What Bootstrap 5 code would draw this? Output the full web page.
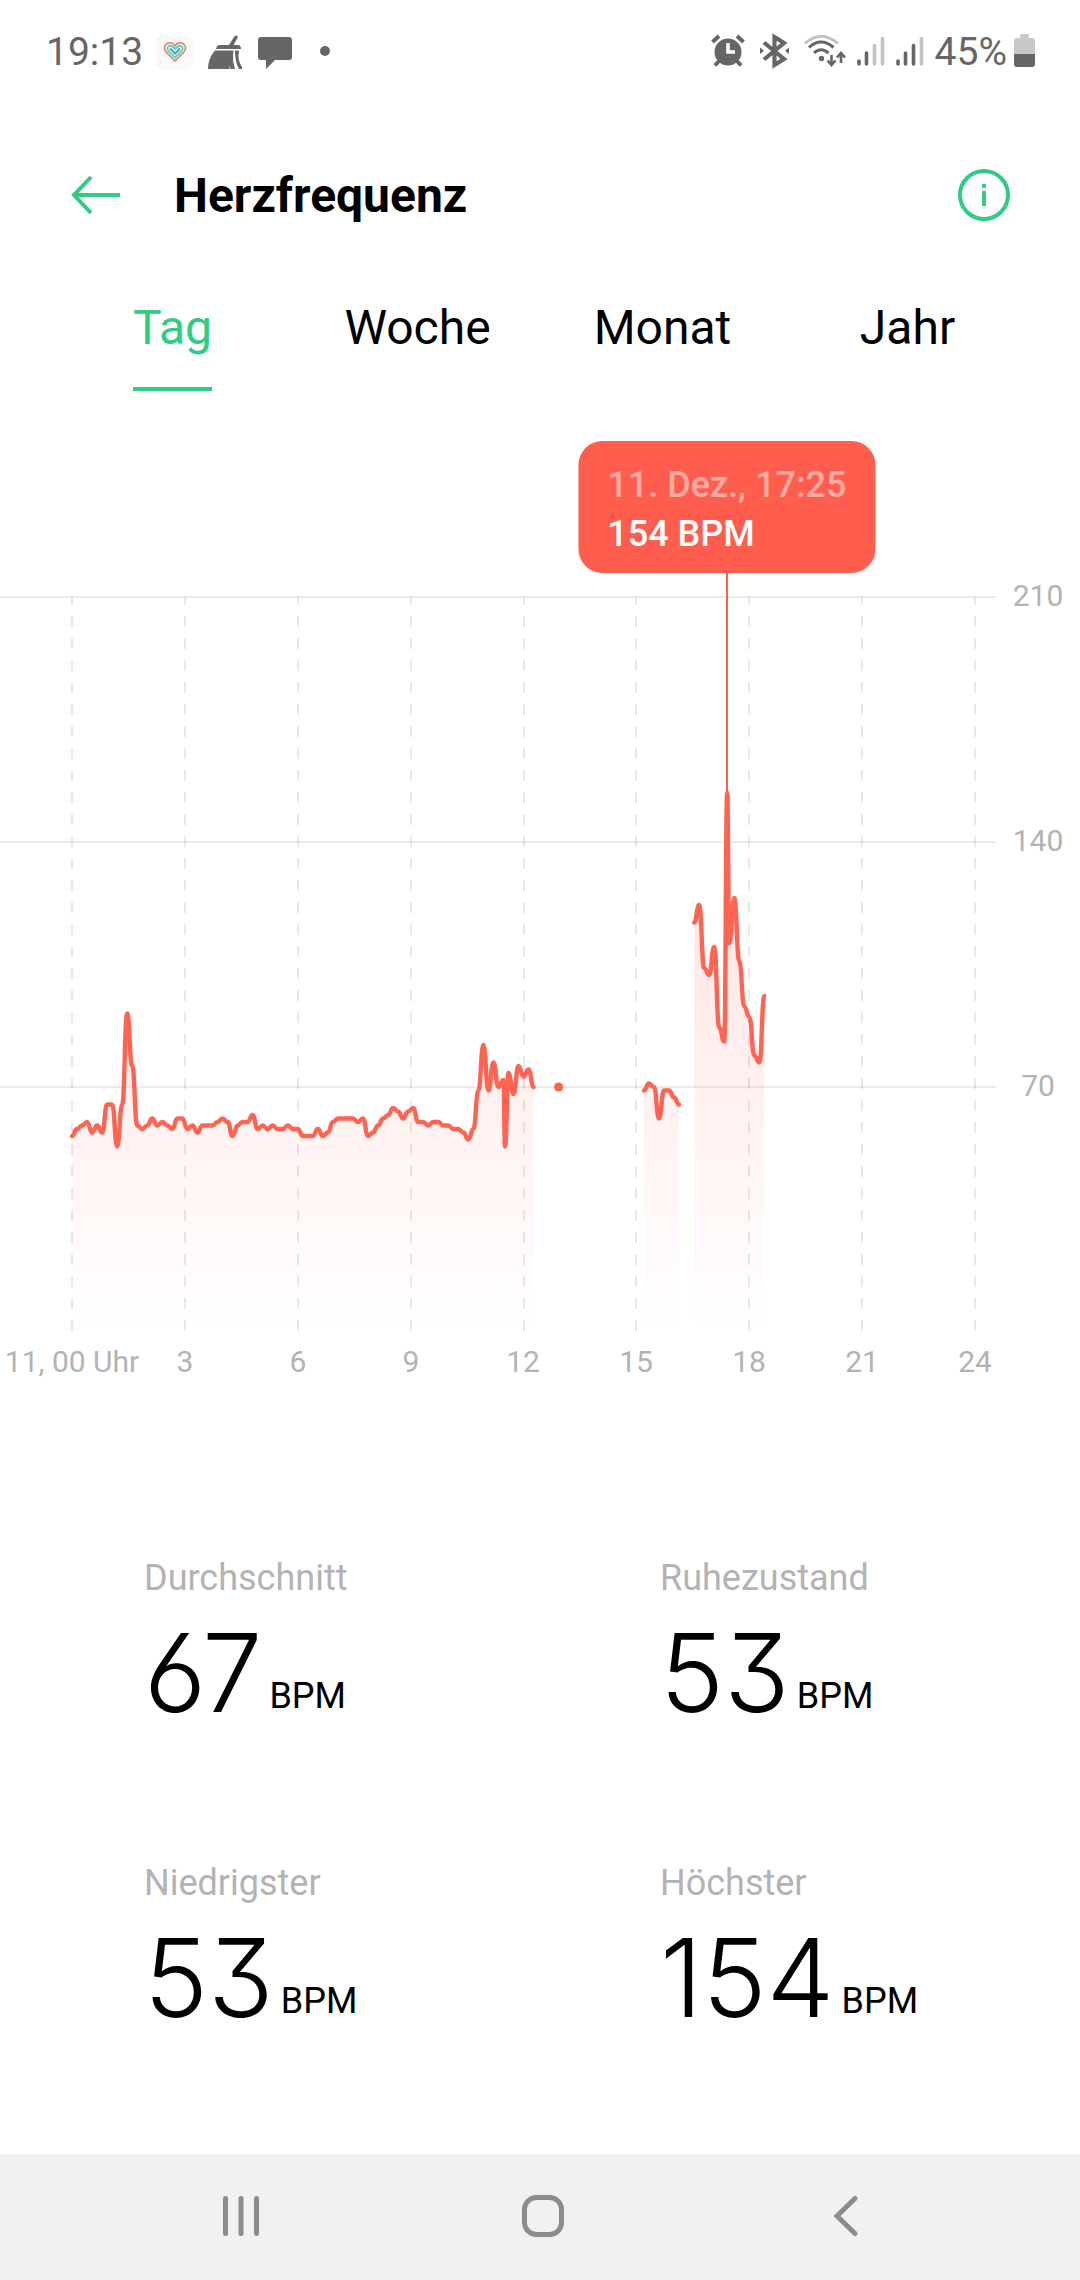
<!DOCTYPE html>
<html lang="de">
<head>
<meta charset="utf-8">
<meta name="viewport" content="width=device-width, initial-scale=1">
<title>Herzfrequenz</title>
<link href="https://cdn.jsdelivr.net/npm/bootstrap@5.3.0/dist/css/bootstrap.min.css" rel="stylesheet">
<style>
  :root { --green: #30cc84; --coral: #ff5e4f; --soft: #b3b3b3; --status: #666; }
  body { font-family: Roboto, "Noto Sans", sans-serif; color: #000; background: #fff; }
  svg { display: block; flex: none; }
  .status-bar { height: 104px; padding: 0 45px 0 46px; color: var(--status); font-size: 39px; line-height: 44px; }
  .app-header { height: 182px; padding: 0 67px 0 68px; }
  .app-title { margin-left: 50px; padding-top: 2px; font-size: 48px; line-height: 56px; font-weight: 700; }
  .icon-btn { padding: 0; border: 0; background: none; color: var(--green); }
  .range-tabs { padding: 0 50px; }
  .range-tabs .nav-link { padding: 14px 0 0; font-size: 48px; line-height: 56px; color: #000; }
  .range-tabs .tab-text { display: inline-block; padding-bottom: 31px; border-bottom: 4px solid transparent; }
  .range-tabs .nav-link.active { color: var(--green); }
  .range-tabs .nav-link.active .tab-text { border-color: var(--green); }
  .axis-label { font-size: 30px; fill: var(--soft); text-anchor: middle; }
  .reading { top: 50px; left: 67.3%; transform: translateX(-50%); padding: 20px 29px 14px; border-radius: 24px;
    background: var(--coral); color: #fff; font-size: 36px; line-height: 49px; font-weight: 500; white-space: nowrap; }
  .reading-time { color: #ffaaa2; }
  .stats { padding: 177px 24px 0; row-gap: 134px; }
  .stat { padding-left: 120px; }
  .stat-label { font-size: 36px; line-height: 42px; font-weight: 400; color: var(--soft); }
  .stat-value { margin: 19px 0 0; gap: 7px; }
  .stat-number { font-family: Inter, Lato, sans-serif; font-weight: 300; font-size: 108px; line-height: 110px;
    font-feature-settings: "cv03", "cv09"; }
  .stat-unit { font-size: 36px; line-height: 42px; padding-bottom: 11px; }
  .system-nav { height: 126px; padding: 0 84px 3px 90px; background: #f1f1f1; }
  .system-nav button { color: #8c8c8c; }
</style>
<script src="https://cdn.jsdelivr.net/npm/bootstrap@5.3.0/dist/js/bootstrap.bundle.min.js" defer></script>
</head>
<body class="d-flex flex-column min-vh-100">

<div class="status-bar d-flex align-items-center justify-content-between">
  <div class="d-flex align-items-center">
    <span>19:13</span>
    <svg width="58" height="40" viewBox="143 32 58 40" aria-hidden="true">
      <rect x="156" y="33" width="37" height="37" rx="9" fill="#f9f9f9"/>
      <g fill="none" stroke-width="1.6">
        <path d="M175 61L166 52C162 46 167 42 171 43C173 43 174 44 175 46C176 44 177 43 179 43C183 42 188 46 184 52Z" stroke="#e67c86"/>
        <path d="M175 57.500L168.500 51C166 48 168 45.500 170.500 45.500C173 46 174 48 175 49C176 48 177 46 179.500 45.500C182 45.500 184 48 181.500 51Z" stroke="#64d99a" stroke-width="2"/>
        <path d="M170 48.500L175 53.500L180 48.500" stroke="#35a6e8" stroke-width="2"/>
      </g>
    </svg>
    <svg width="50" height="40" viewBox="201 32 50 40" fill="#666" aria-hidden="true">
      <path d="M229 45L234 37Q236 34 238 37L233 46Z"/>
      <path d="M217 46Q218 45 220 45H239Q241 46 241 49H216Z"/>
      <path d="M215 50.500H233.500Q232 60 235 69H230.500L229.500 65V69H208Q208 58 215 50.500Z"/>
      <path d="M235 50.500H239Q237 60 242 67V69H239Q235 62 235 50.500Z"/>
    </svg>
    <svg width="84" height="40" viewBox="251 32 84 40" fill="#666" aria-hidden="true">
      <path d="M261 37H289Q292 37 292 40V57Q292 60 289 60H275L266 69V60H261Q258 60 258 57V40Q258 37 261 37Z"/>
      <circle cx="325" cy="51" r="5"/>
    </svg>
  </div>
  <div class="d-flex align-items-center">
    <svg width="47" height="40" viewBox="704 32 47 40" aria-hidden="true">
      <g stroke="#666" stroke-width="4" fill="none">
        <path d="M711.500 42L718 36M742.500 42L736 36M718 61L714 65.500M736 61L740 65.500"/>
      </g>
      <circle cx="727" cy="52" r="13.500" fill="#666"/>
      <path d="M727 43V52H734" fill="none" stroke="#fff" stroke-width="3.600"/>
    </svg>
    <svg width="45" height="40" viewBox="751 32 45 40" aria-hidden="true">
      <path d="M763 42.500L783 59L773.500 65V37L783 43L763 59.500" fill="none" stroke="#666" stroke-width="4.200"/>
      <path d="M759 47.500V54L763 50.700ZM788 47.500V54L784 50.700Z" fill="#666"/>
    </svg>
    <svg width="54" height="40" viewBox="796 32 54 40" fill="none" stroke="#666" stroke-width="3" aria-hidden="true">
      <path d="M804 43.500Q820 29 837 43.500" stroke="#c2c2c2"/>
      <path d="M808 47.500Q820 36.500 832.500 47.500M813 53Q820 46.500 827.500 53"/>
      <circle cx="820.500" cy="58.500" r="2.700" fill="#666" stroke="none"/>
      <path d="M830.500 55V65M826.500 60.500L830.500 65L834.500 60.500M840 63V53M836 57.500L840 53L844 57.500" stroke-width="2.600"/>
    </svg>
    <svg width="39" height="40" viewBox="850 32 39 40" stroke-width="3.600" stroke-linecap="round" aria-hidden="true">
      <path d="M858 61V64M865.500 53V64" stroke="#666"/><path d="M873.500 45.500V64M881.500 38.500V64" stroke="#c2c2c2"/>
    </svg>
    <svg width="45" height="40" viewBox="889 32 45 40" stroke-width="3.600" stroke-linecap="round" aria-hidden="true">
      <path d="M897 61V64M904.500 53V64M912.500 45.500V64" stroke="#666"/><path d="M920.500 38.500V64" stroke="#c2c2c2"/>
    </svg>
    <span>45%</span>
    <svg width="28" height="40" viewBox="1007 32 28 40" aria-hidden="true">
      <path d="M1020 38V36Q1020 34 1022 34H1027Q1029 34 1029 36V38H1032Q1035 38 1035 41V54H1014V41Q1014 38 1017 38Z" fill="#c8c8c8"/>
      <path d="M1014 54H1035V64Q1035 67 1032 67H1017Q1014 67 1014 64Z" fill="#666"/>
    </svg>
  </div>
</div>

<header class="app-header d-flex align-items-center">
  <button type="button" class="icon-btn" aria-label="Zurück">
    <svg width="56" height="56" viewBox="0 0 56 56" fill="none" stroke="currentColor" stroke-width="4"><path d="M52 28H6M23 10L6 28L23 46"/></svg>
  </button>
  <h1 class="app-title mb-0">Herzfrequenz</h1>
  <button type="button" class="icon-btn ms-auto" aria-label="Information">
    <svg width="58" height="58" viewBox="0 0 58 58" fill="none" stroke="currentColor" stroke-width="4"><circle cx="29" cy="29" r="24"/><path d="M29 25V40M29 18V22"/></svg>
  </button>
</header>

<nav class="range-tabs nav nav-justified" aria-label="Zeitraum">
  <a class="nav-link active" href="#tag" aria-current="page"><span class="tab-text">Tag</span></a>
  <a class="nav-link" href="#woche"><span class="tab-text">Woche</span></a>
  <a class="nav-link" href="#monat"><span class="tab-text">Monat</span></a>
  <a class="nav-link" href="#jahr"><span class="tab-text">Jahr</span></a>
</nav>

<main>
  <section class="position-relative">
    <svg id="chart" class="w-100 h-auto" viewBox="0 391 1080 989" role="img" aria-label="Herzfrequenz im Tagesverlauf">
      <defs>
        <linearGradient id="fade" gradientUnits="userSpaceOnUse" x1="0" y1="793" x2="0" y2="1332">
          <stop offset="0" stop-color="#ff5e4f" stop-opacity=".19"/>
          <stop offset="1" stop-color="#ff5e4f" stop-opacity="0"/>
        </linearGradient>
      </defs>
      <g id="areas" fill="url(#fade)"></g>
      <path d="M0 597H996M0 842H996M0 1087H996" stroke="#000" stroke-opacity=".08" stroke-width="2"/>
      <path id="hours" stroke="#000" stroke-opacity=".085" stroke-width="2" stroke-dasharray="11 11" stroke-dashoffset="3"/>
      <path d="M727 560V800" stroke="#f9604f" stroke-width="2"/>
      <g id="lines" fill="none" stroke="#ff6452" stroke-width="4.400" stroke-linecap="round" stroke-linejoin="round"></g>
      <circle cx="558.600" cy="1087" r="4.600" fill="#ff6452"/>
      <g class="axis-label">
        <text x="1038" y="606">210</text><text x="1038" y="851">140</text><text x="1038" y="1096">70</text>
        <text x="72" y="1372">11, 00 Uhr</text><text x="185" y="1372">3</text><text x="298" y="1372">6</text>
        <text x="411" y="1372">9</text><text x="523" y="1372">12</text><text x="636" y="1372">15</text>
        <text x="749" y="1372">18</text><text x="862" y="1372">21</text><text x="975" y="1372">24</text>
      </g>
    </svg>
    <div class="reading position-absolute">
      <div class="reading-time">11. Dez., 17:25</div>
      <div>154 BPM</div>
    </div>
  </section>

  <section class="stats row row-cols-2 g-0">
    <div class="stat">
      <h2 class="stat-label mb-0">Durchschnitt</h2>
      <p class="stat-value d-flex align-items-end"><span class="stat-number">67</span><span class="stat-unit">BPM</span></p>
    </div>
    <div class="stat">
      <h2 class="stat-label mb-0">Ruhezustand</h2>
      <p class="stat-value d-flex align-items-end"><span class="stat-number">53</span><span class="stat-unit">BPM</span></p>
    </div>
    <div class="stat">
      <h2 class="stat-label mb-0">Niedrigster</h2>
      <p class="stat-value d-flex align-items-end"><span class="stat-number">53</span><span class="stat-unit">BPM</span></p>
    </div>
    <div class="stat">
      <h2 class="stat-label mb-0">Höchster</h2>
      <p class="stat-value d-flex align-items-end"><span class="stat-number">154</span><span class="stat-unit">BPM</span></p>
    </div>
  </section>
</main>

<footer class="system-nav d-flex align-items-stretch mt-auto">
  <button type="button" class="icon-btn flex-fill d-flex align-items-center justify-content-center w-100" aria-label="Letzte Apps">
    <svg width="48" height="48" viewBox="0 0 48 48" stroke="currentColor" stroke-width="5" stroke-linecap="round"><path d="M8.500 6.500V41.500M24 6.500V41.500M39.500 6.500V41.500"/></svg>
  </button>
  <button type="button" class="icon-btn flex-fill d-flex align-items-center justify-content-center w-100" aria-label="Startseite">
    <svg width="48" height="48" viewBox="0 0 48 48" fill="none" stroke="currentColor" stroke-width="5"><rect x="5.500" y="5.500" width="37" height="37" rx="12"/></svg>
  </button>
  <button type="button" class="icon-btn flex-fill d-flex align-items-center justify-content-center w-100" aria-label="Zurück">
    <svg width="48" height="48" viewBox="0 0 48 48" fill="none" stroke="currentColor" stroke-width="5" stroke-linecap="round"><path d="M34 6.500L16 24L34 41.500"/></svg>
  </button>
</footer>

<script>
  // One reading every eight minutes; [slot, bpm] marks a reading between two slots.
  const segments = [
    { start: 0, bpm: [56,58,59,60,57,59,57,65,65,53,65,91,76,59,58,59,61,59,60,59,58,61,61,58,59,57,59,59,59,60,61,60,56,59,60,60,62,58,59,58,59,58,58,59,58,58,56,56,56,58,56,57,60,61,61,61,61,60,61,56,57,59,61,62,64,63,61,63,64,60,60,59,60,60,59,59,58,58,57,55,58,69,82,69,77,70,72,[86.3,53],74,68,76,73,75,70] },
    { start: 114, bpm: [69,71,70,61,69,69,67,65] },
    { start: 124, bpm: [117,122,104,102,110,87,83,[130.6,154],111,124,106,93,90,79,77,96] }
  ];
  const left = 72, slotWidth = 5.017, base = 1332, perBeat = 3.5;
  const draw = (parent, d) => {
    const p = document.createElementNS('http://www.w3.org/2000/svg', 'path');
    p.setAttribute('d', d);
    document.getElementById(parent).appendChild(p);
  };
  segments.forEach(({ start, bpm }) => {
    let slot = start;
    const pts = bpm.map(v => {
      const [s, b] = Array.isArray(v) ? v : [slot++, v];
      return [left + s * slotWidth, base - b * perBeat];
    });
    let d = `M${pts[0]}`;
    for (let i = 1; i < pts.length; i++) {
      const mid = (pts[i - 1][0] + pts[i][0]) / 2;
      d += `C${mid},${pts[i - 1][1]} ${mid},${pts[i][1]} ${pts[i]}`;
    }
    draw('lines', d);
    draw('areas', `${d}V${base}H${pts[0][0]}Z`);
  });
  document.getElementById('hours').setAttribute('d',
    Array.from({ length: 9 }, (_, i) => `M${Math.round(left + i * 112.88)} 597V1332`).join(''));
</script>
</body>
</html>
